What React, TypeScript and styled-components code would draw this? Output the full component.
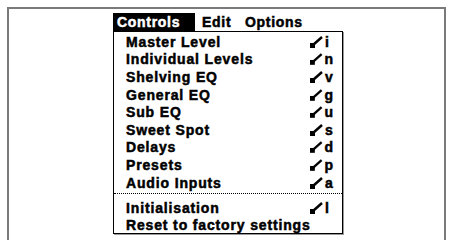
import React from 'react'
import styled, { createGlobalStyle } from 'styled-components'

const GlobalStyle = createGlobalStyle`
  html, body {
    margin: 0;
    padding: 0;
    background: #ffffff;
    font-family: "Liberation Sans", Arial, sans-serif;
  }
`

const Frame = styled.div`
  box-sizing: border-box;
  margin: 7px 0 0 7px;
  width: 439px;
  height: 233px;
  border: 2px solid #7a7a7a;
  border-bottom: none;
  padding: 4px 0 0 104px;
`

const MenuBar = styled.div`
  display: flex;
  height: 18px;
  align-items: stretch;
`

const BarItem = styled.div<{ $active?: boolean; $width: number; $indent: number }>`
  box-sizing: border-box;
  width: ${(p) => p.$width}px;
  padding-left: ${(p) => p.$indent}px;
  display: flex;
  align-items: center;
  font-size: 14px;
  font-weight: 700;
  letter-spacing: 0.7px;
  -webkit-text-stroke: 0.5px currentColor;
  background: ${(p) => (p.$active ? '#000000' : 'transparent')};
  color: ${(p) => (p.$active ? '#ffffff' : '#000000')};
`

const Dropdown = styled.div`
  box-sizing: border-box;
  width: 230px;
  height: 203px;
  border: 1px solid #000000;
  box-shadow: 1px 1px 0 #9a9a9a;
  padding-top: 1px;
`

const Item = styled.div`
  display: grid;
  grid-template-columns: 1fr 24px;
  align-items: center;
  height: 17.6px;
  padding: 0 8px 0 12px;
  font-size: 14px;
  font-weight: 700;
  letter-spacing: 0.85px;
  -webkit-text-stroke: 0.5px currentColor;
  color: #000000;
  white-space: nowrap;
`

const Shortcut = styled.span`
  display: flex;
  align-items: center;
  gap: 2px;
`

const Separator = styled.div`
  height: 7.4px;
  display: flex;
  align-items: flex-start;
  padding-top: 1.4px;
  box-sizing: border-box;
  &::before {
    content: '';
    display: block;
    width: 100%;
    border-top: 1px dotted #000000;
  }
`

function CommandGlyph() {
  return (
    <svg width="13" height="12" viewBox="0 0 13 12">
      <rect x="0" y="7" width="5" height="5" fill="#000" />
      <line x1="3" y1="9" x2="12" y2="1" stroke="#000" strokeWidth="2.4" />
    </svg>
  )
}

interface MenuEntry {
  label: string
  shortcut?: string
}

const mainItems: MenuEntry[] = [
  { label: 'Master Level', shortcut: 'i' },
  { label: 'Individual Levels', shortcut: 'n' },
  { label: 'Shelving EQ', shortcut: 'v' },
  { label: 'General EQ', shortcut: 'g' },
  { label: 'Sub EQ', shortcut: 'u' },
  { label: 'Sweet Spot', shortcut: 's' },
  { label: 'Delays', shortcut: 'd' },
  { label: 'Presets', shortcut: 'p' },
  { label: 'Audio Inputs', shortcut: 'a' },
]

const setupItems: MenuEntry[] = [
  { label: 'Initialisation', shortcut: 'l' },
  { label: 'Reset to factory settings' },
]

function MenuRow({ label, shortcut }: MenuEntry) {
  return (
    <Item>
      <span>{label}</span>
      {shortcut && (
        <Shortcut>
          <CommandGlyph />
          {shortcut}
        </Shortcut>
      )}
    </Item>
  )
}

export default function App(): JSX.Element {
  return (
    <>
      <GlobalStyle />
      <Frame>
        <MenuBar>
          <BarItem $active $width={82} $indent={4}>Controls</BarItem>
          <BarItem $width={50} $indent={7}>Edit</BarItem>
          <BarItem $width={70} $indent={0}>Options</BarItem>
        </MenuBar>
        <Dropdown>
          {mainItems.map((m) => (
            <MenuRow key={m.label} {...m} />
          ))}
          <Separator />
          {setupItems.map((m) => (
            <MenuRow key={m.label} {...m} />
          ))}
        </Dropdown>
      </Frame>
    </>
  )
}
